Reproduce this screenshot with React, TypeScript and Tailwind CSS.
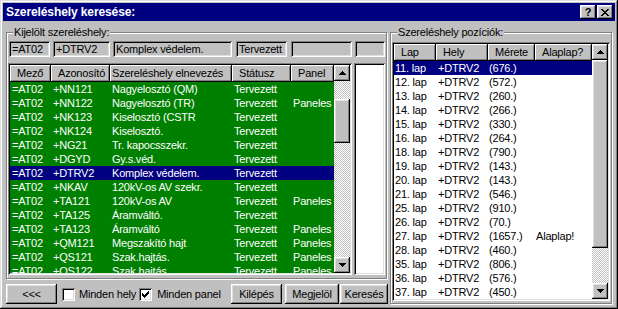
import React from "react";

const RAISED =
  "shadow-[inset_-1px_-1px_#000,inset_1px_1px_#fff,inset_-2px_-2px_#808080,inset_2px_2px_#dfdfdf]";
const SUNKEN =
  "shadow-[inset_1px_1px_#808080,inset_-1px_-1px_#fff,inset_2px_2px_#000,inset_-2px_-2px_#dfdfdf]";
const HEADER = "shadow-[inset_-1px_-1px_#000,inset_1px_1px_#fff,inset_-2px_-2px_#808080]";
const CHECKER =
  "bg-[image:repeating-conic-gradient(#c0c0c0_0_25%,#fff_0_50%)] bg-[length:2px_2px]";

function Arrow({ dir }: { dir: "up" | "down" }) {
  return (
    <div className={`w-[16px] h-[16px] shrink-0 bg-[#c0c0c0] ${RAISED} flex items-center justify-center`}>
      <svg width="7" height="4" viewBox="0 0 7 4" shapeRendering="crispEdges">
        {dir === "up" ? (
          <path d="M3 0h1v1h-1z M2 1h3v1h-3z M1 2h5v1h-5z M0 3h7v1h-7z" fill="#000" />
        ) : (
          <path d="M0 0h7v1h-7z M1 1h5v1h-5z M2 2h3v1h-3z M3 3h1v1h-1z" fill="#000" />
        )}
      </svg>
    </div>
  );
}

function VScroll({ before, thumb }: { before: string; thumb: string }) {
  return (
    <div className="w-[16px] h-full flex flex-col shrink-0">
      <Arrow dir="up" />
      <div className={`flex-1 flex flex-col ${CHECKER}`}>
        <div className={before} />
        <div className={`${thumb} bg-[#c0c0c0] ${RAISED}`} />
      </div>
      <Arrow dir="down" />
    </div>
  );
}

function Group({
  label,
  className,
  children,
}: {
  label: string;
  className: string;
  children: React.ReactNode;
}) {
  return (
    <div
      className={`relative border border-[#808080] shadow-[inset_1px_1px_#fff,1px_1px_#fff] ${className}`}
    >
      <span className="absolute top-[-7px] left-[6px] px-[1px] bg-[#c0c0c0] leading-[12px] whitespace-nowrap">
        {label}
      </span>
      {children}
    </div>
  );
}

function Field({ className, text }: { className: string; text?: string }) {
  return (
    <div
      className={`h-[16px] bg-[#c0c0c0] ${SUNKEN} pl-[3px] leading-[16px] whitespace-nowrap overflow-hidden ${className}`}
    >
      {text}
    </div>
  );
}

function Btn({ className, children }: { className: string; children: React.ReactNode }) {
  return (
    <div
      className={`h-[20px] bg-[#c0c0c0] ${RAISED} flex items-center justify-center whitespace-nowrap ${className}`}
    >
      {children}
    </div>
  );
}

function Checkbox({ checked, className }: { checked?: boolean; className: string }) {
  return (
    <div className={`w-[13px] h-[13px] bg-white ${SUNKEN} flex items-center justify-center ${className}`}>
      {checked && (
        <svg width="7" height="7" viewBox="0 0 7 7" shapeRendering="crispEdges">
          <path
            d="M6 0h1v1h-1z M5 1h2v1h-2z M0 2h1v1h-1z M4 2h3v1h-3z M0 3h2v1h-2z M3 3h3v1h-3z M0 4h5v1h-5z M1 5h3v1h-3z M2 6h1v1h-1z"
            fill="#000"
          />
        </svg>
      )}
    </div>
  );
}

const leftCols = [
  { w: "w-[41px]", hp: "pl-[7px]", name: "Mező" },
  { w: "w-[59px]", hp: "pl-[7px]", name: "Azonosító" },
  { w: "w-[122px]", hp: "pl-[2px]", name: "Szereléshely elnevezés" },
  { w: "w-[59px]", hp: "pl-[7px]", name: "Státusz" },
  { w: "w-[43px]", hp: "pl-[7px]", name: "Panel" },
];

const leftRows: string[][] = [
  ["=AT02", "+NN121", "Nagyelosztó (QM)", "Tervezett", ""],
  ["=AT02", "+NN122", "Nagyelosztó (TR)", "Tervezett", "Paneles"],
  ["=AT02", "+NK123", "Kiselosztó (CSTR", "Tervezett", ""],
  ["=AT02", "+NK124", "Kiselosztó.", "Tervezett", ""],
  ["=AT02", "+NG21", "Tr. kapocsszekr.", "Tervezett", ""],
  ["=AT02", "+DGYD", "Gy.s.véd.", "Tervezett", ""],
  ["=AT02", "+DTRV2", "Komplex védelem.", "Tervezett", ""],
  ["=AT02", "+NKAV", "120kV-os AV szekr.", "Tervezett", ""],
  ["=AT02", "+TA121", "120kV-os AV", "Tervezett", "Paneles"],
  ["=AT02", "+TA125", "Áramváltó.", "Tervezett", ""],
  ["=AT02", "+TA123", "Áramváltó", "Tervezett", "Paneles"],
  ["=AT02", "+QM121", "Megszakító hajt", "Tervezett", "Paneles"],
  ["=AT02", "+QS121", "Szak.hajtás.", "Tervezett", "Paneles"],
  ["=AT02", "+QS122", "Szak.hajtás.", "Tervezett", "Paneles"],
];

const rightCols = [
  { w: "w-[42px]", name: "Lap" },
  { w: "w-[52px]", name: "Hely" },
  { w: "w-[47px]", name: "Mérete" },
  { w: "w-[57px]", name: "Alaplap?" },
];

const rightRows: string[][] = [
  ["11. lap", "(676.)", ""],
  ["12. lap", "(572.)", ""],
  ["13. lap", "(260.)", ""],
  ["14. lap", "(266.)", ""],
  ["15. lap", "(330.)", ""],
  ["16. lap", "(264.)", ""],
  ["18. lap", "(790.)", ""],
  ["19. lap", "(143.)", ""],
  ["20. lap", "(143.)", ""],
  ["21. lap", "(546.)", ""],
  ["25. lap", "(910.)", ""],
  ["26. lap", "(70.)", ""],
  ["27. lap", "(1657.)", "Alaplap!"],
  ["28. lap", "(460.)", ""],
  ["35. lap", "(806.)", ""],
  ["36. lap", "(576.)", ""],
  ["37. lap", "(450.)", ""],
];

export default function App() {
  return (
    <div className="w-[618px] h-[309px] bg-[#c0c0c0] p-[3px] shadow-[inset_-1px_-1px_#000,inset_1px_1px_#dfdfdf,inset_-2px_-2px_#808080,inset_2px_2px_#fff] font-['Liberation_Sans',Arial,sans-serif] text-[11px] tracking-[-0.2px] text-black flex flex-col overflow-hidden">
      {/* Title bar */}
      <div className="h-[18px] shrink-0 bg-[#000080] flex items-center pl-[3px] pr-[2px]">
        <span className="flex-1 text-white font-bold text-[12px] leading-[18px] tracking-[-0.1px] whitespace-nowrap">
          Szereléshely keresése:
        </span>
        <div className={`w-[16px] h-[14px] bg-[#c0c0c0] ${RAISED} flex items-center justify-center font-bold text-[11px] leading-[14px] pb-[1px]`}>
          ?
        </div>
        <div className={`ml-[1px] w-[16px] h-[14px] bg-[#c0c0c0] ${RAISED} flex items-center justify-center`}>
          <svg width="8" height="7" viewBox="0 0 8 7" shapeRendering="crispEdges">
            <path
              d="M0 0h2v1h-2z M6 0h2v1h-2z M1 1h2v1h-2z M5 1h2v1h-2z M2 2h4v1h-4z M3 3h2v1h-2z M2 4h4v1h-4z M1 5h2v1h-2z M5 5h2v1h-2z M0 6h2v1h-2z M6 6h2v1h-2z"
              fill="#000"
            />
          </svg>
        </div>
      </div>

      <div className="flex pl-[3px] pt-[11px]">
        {/* Left column */}
        <div className="w-[382px] flex flex-col shrink-0">
          <Group label="Kijelölt szereléshely:" className="w-[381px] h-[247px] pt-[8px]">
            <div className="flex">
              <Field className="ml-[2px] w-[41px]" text="=AT02" />
              <Field className="ml-[3px] w-[57px]" text="+DTRV2" />
              <Field className="ml-[3px] w-[119px]" text="Komplex védelem." />
              <Field className="ml-[4px] w-[51px]" text="Tervezett" />
              <Field className="ml-[4px] w-[61px]" />
              <Field className="ml-[3px] w-[30px]" />
            </div>
            <div className="flex mt-[6px]">
              <div className={`ml-[1px] w-[344px] h-[212px] p-[2px] bg-[#c0c0c0] ${SUNKEN} flex`}>
                <div className="w-[324px] h-full flex flex-col bg-[#008000] overflow-hidden">
                  <div className="flex h-[17px] shrink-0 bg-[#c0c0c0]">
                    {leftCols.map((c) => (
                      <div
                        key={c.name}
                        className={`${c.w} ${c.hp} h-[17px] ${HEADER} leading-[17px] whitespace-nowrap overflow-hidden shrink-0`}
                      >
                        {c.name}
                      </div>
                    ))}
                  </div>
                  <div className="flex-1 overflow-hidden text-white">
                    {leftRows.map((r, i) => (
                      <div
                        key={i}
                        className={`flex h-[14px] leading-[14px] ${i === 6 ? "bg-[#000080]" : ""}`}
                      >
                        {r.map((t, j) => (
                          <div
                            key={j}
                            className={`${leftCols[j].w} pl-[2px] whitespace-nowrap overflow-hidden shrink-0`}
                          >
                            {t}
                          </div>
                        ))}
                      </div>
                    ))}
                  </div>
                </div>
                <VScroll before="h-[18px] shrink-0" thumb="h-[44px] shrink-0" />
              </div>
              <div className={`ml-[2px] w-[31px] h-[212px] p-[2px] bg-[#c0c0c0] ${SUNKEN}`}>
                <div className="w-full h-full bg-white" />
              </div>
            </div>
          </Group>

          {/* Bottom bar */}
          <div className="mt-[5px] h-[20px] flex items-center">
            <Btn className="w-[51px]">&lt;&lt;&lt;</Btn>
            <Checkbox className="ml-[5px]" />
            <span className="ml-[4px] whitespace-nowrap">Minden hely</span>
            <Checkbox className="ml-[3px]" checked />
            <span className="ml-[5px] whitespace-nowrap">Minden panel</span>
            <div className="flex-1" />
            <Btn className="w-[51px]">Kilépés</Btn>
            <Btn className="ml-[3px] w-[54px]">Megjelöl</Btn>
            <Btn className="ml-[1px] w-[48px]">Keresés</Btn>
          </div>
        </div>

        {/* Right group */}
        <Group label="Szereléshely pozíciók:" className="ml-[2px] w-[222px] h-[272px] pt-[9px] pl-[1px] shrink-0">
          <div className={`w-[218px] h-[259px] p-[2px] bg-[#c0c0c0] ${SUNKEN} flex`}>
            <div className="w-[198px] h-full flex flex-col bg-white overflow-hidden">
              <div className="flex h-[17px] shrink-0 bg-[#c0c0c0]">
                {rightCols.map((c) => (
                  <div
                    key={c.name}
                    className={`${c.w} pl-[7px] h-[17px] ${HEADER} leading-[17px] whitespace-nowrap overflow-hidden shrink-0`}
                  >
                    {c.name}
                  </div>
                ))}
              </div>
              <div className="flex-1 overflow-hidden">
                {rightRows.map((r, i) => (
                  <div
                    key={i}
                    className={`flex h-[14px] leading-[14px] ${i === 0 ? "bg-[#000080] text-white" : ""}`}
                  >
                    <div className="w-[42px] pl-[1px] whitespace-nowrap shrink-0">{r[0]}</div>
                    <div className="w-[52px] pl-[2px] whitespace-nowrap shrink-0">+DTRV2</div>
                    <div className="w-[47px] pl-[1px] whitespace-nowrap shrink-0">{r[1]}</div>
                    <div className="w-[57px] pl-[1px] whitespace-nowrap shrink-0">{r[2]}</div>
                  </div>
                ))}
              </div>
            </div>
            <VScroll before="h-0" thumb="h-[188px] shrink-0" />
          </div>
        </Group>
      </div>
    </div>
  );
}
